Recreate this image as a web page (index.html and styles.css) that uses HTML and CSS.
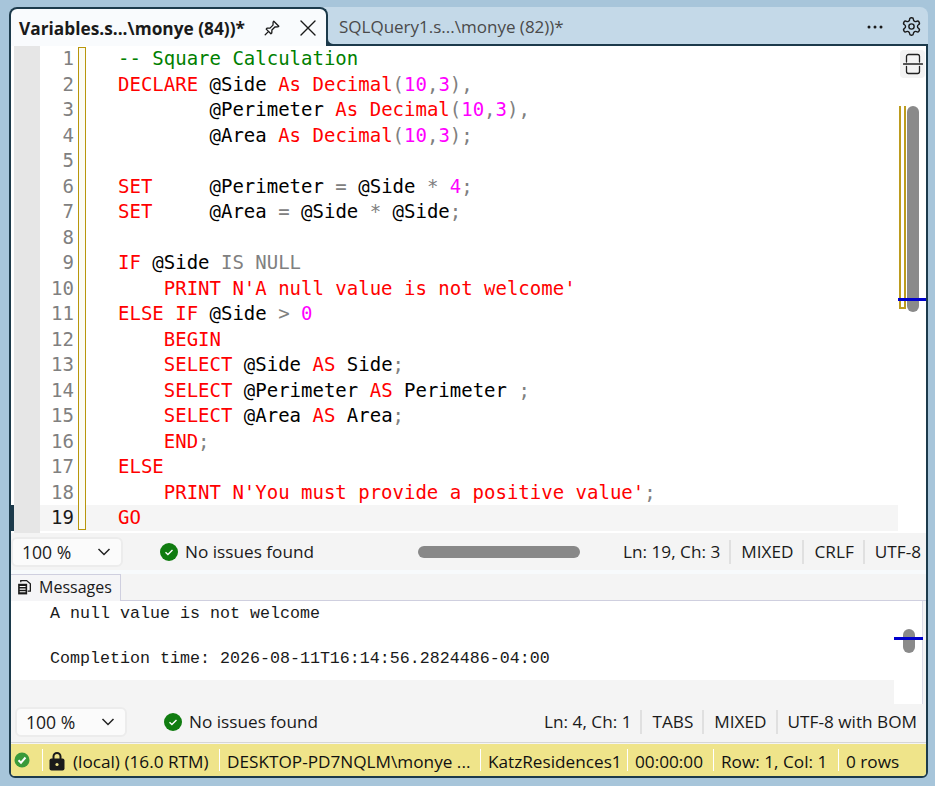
FILE: index.html
```html
<!DOCTYPE html>
<html lang="en">
<head>
<meta charset="UTF-8">
<title>Variables.sql</title>
<link rel="stylesheet" href="styles.css">
</head>
<body>

<div class="window">

  <!-- tab strip -->
  <div class="tabstrip">
    <div class="tab active">
      <span class="tab-title">Variables.s...\monye (84))*</span>
      <svg class="pin" width="18" height="18" viewBox="0 0 18 18" fill="none" stroke="#1a1a1a" stroke-width="1.3" stroke-linejoin="round" stroke-linecap="round">
        <path d="M10.8 2.2 15.8 7.2 14.8 7.9 11.9 8 8.9 11 8.8 14 7.9 14.8 3.2 10.1 4 9.2 7 9.1 10 6.1 10.1 3.2Z"/>
        <path d="M5.4 12.6 2.2 15.8"/>
      </svg>
      <svg class="close" width="16" height="16" viewBox="0 0 16 16" stroke="#1a1a1a" stroke-width="1.4" stroke-linecap="round">
        <path d="M1 1 15 15M15 1 1 15"/>
      </svg>
    </div>
    <div class="tab other">SQLQuery1.s...\monye (82))*</div>
    <div class="tab-tools">
      <svg width="16" height="4" viewBox="0 0 16 4" fill="#1a1a1a"><circle cx="2" cy="2" r="1.5"/><circle cx="8" cy="2" r="1.5"/><circle cx="14" cy="2" r="1.5"/></svg>
      <svg width="21" height="21" viewBox="0 0 24 24" fill="none" stroke="#1a1a1a" stroke-width="1.6"><path d="M12.22 2h-.44a2 2 0 0 0-2 2v.18a2 2 0 0 1-1 1.73l-.43.25a2 2 0 0 1-2 0l-.15-.08a2 2 0 0 0-2.73.73l-.22.38a2 2 0 0 0 .73 2.73l.15.1a2 2 0 0 1 1 1.72v.51a2 2 0 0 1-1 1.74l-.15.09a2 2 0 0 0-.73 2.73l.22.38a2 2 0 0 0 2.73.73l.15-.08a2 2 0 0 1 2 0l.43.25a2 2 0 0 1 1 1.73V20a2 2 0 0 0 2 2h.44a2 2 0 0 0 2-2v-.18a2 2 0 0 1 1-1.73l.43-.25a2 2 0 0 1 2 0l.15.08a2 2 0 0 0 2.73-.73l.22-.39a2 2 0 0 0-.73-2.73l-.15-.08a2 2 0 0 1-1-1.74v-.5a2 2 0 0 1 1-1.74l.15-.09a2 2 0 0 0 .73-2.73l-.22-.38a2 2 0 0 0-2.73-.73l-.15.08a2 2 0 0 1-2 0l-.43-.25a2 2 0 0 1-1-1.73V4a2 2 0 0 0-2-2z"/><circle cx="12" cy="12" r="3"/></svg>
    </div>
  </div>

  <div class="body">

    <!-- editor -->
    <div class="editor">
      <div class="glyph-margin"></div>
      <div class="rows">
        <div class="row"><span class="ln">1</span><span class="code"><span class="c">-- Square Calculation</span></span></div>
        <div class="row"><span class="ln">2</span><span class="code"><span class="k">DECLARE</span> @Side <span class="k">As</span> <span class="k">Decimal</span><span class="p">(</span><span class="n">10</span><span class="p">,</span><span class="n">3</span><span class="p">),</span></span></div>
        <div class="row"><span class="ln">3</span><span class="code">        @Perimeter <span class="k">As</span> <span class="k">Decimal</span><span class="p">(</span><span class="n">10</span><span class="p">,</span><span class="n">3</span><span class="p">),</span></span></div>
        <div class="row"><span class="ln">4</span><span class="code">        @Area <span class="k">As</span> <span class="k">Decimal</span><span class="p">(</span><span class="n">10</span><span class="p">,</span><span class="n">3</span><span class="p">);</span></span></div>
        <div class="row"><span class="ln">5</span><span class="code"></span></div>
        <div class="row"><span class="ln">6</span><span class="code"><span class="k">SET</span>     @Perimeter <span class="p">=</span> @Side <span class="p">*</span> <span class="n">4</span><span class="p">;</span></span></div>
        <div class="row"><span class="ln">7</span><span class="code"><span class="k">SET</span>     @Area <span class="p">=</span> @Side <span class="p">*</span> @Side<span class="p">;</span></span></div>
        <div class="row"><span class="ln">8</span><span class="code"></span></div>
        <div class="row"><span class="ln">9</span><span class="code"><span class="k">IF</span> @Side <span class="p">IS NULL</span></span></div>
        <div class="row"><span class="ln">10</span><span class="code">    <span class="k">PRINT N'A null value is not welcome'</span></span></div>
        <div class="row"><span class="ln">11</span><span class="code"><span class="k">ELSE IF</span> @Side <span class="p">&gt;</span> <span class="n">0</span></span></div>
        <div class="row"><span class="ln">12</span><span class="code">    <span class="k">BEGIN</span></span></div>
        <div class="row"><span class="ln">13</span><span class="code">    <span class="k">SELECT</span> @Side <span class="k">AS</span> Side<span class="p">;</span></span></div>
        <div class="row"><span class="ln">14</span><span class="code">    <span class="k">SELECT</span> @Perimeter <span class="k">AS</span> Perimeter <span class="p">;</span></span></div>
        <div class="row"><span class="ln">15</span><span class="code">    <span class="k">SELECT</span> @Area <span class="k">AS</span> Area<span class="p">;</span></span></div>
        <div class="row"><span class="ln">16</span><span class="code">    <span class="k">END</span><span class="p">;</span></span></div>
        <div class="row"><span class="ln">17</span><span class="code"><span class="k">ELSE</span></span></div>
        <div class="row"><span class="ln">18</span><span class="code">    <span class="k">PRINT N'You must provide a positive value'</span><span class="p">;</span></span></div>
        <div class="row current"><span class="ln">19</span><span class="code"><span class="k">GO</span></span></div>
      </div>

      <!-- things lying over the text -->
      <div class="change-bar"></div>
      <div class="current-mark"></div>
      <div class="split-btn">
        <svg width="20" height="24" viewBox="0 0 20 24" fill="none" stroke="#222" stroke-width="1.3" stroke-linecap="round">
          <path d="M3.5 10V4.5A2 2 0 0 1 5.500 2.500H14.500A2 2 0 0 1 16.500 4.500V10"/>
          <path d="M3.500 14.500V19.500A2 2 0 0 0 5.500 21.500H14.500A2 2 0 0 0 16.500 19.500V14.500"/>
          <path d="M0.500 12H19.500"/>
        </svg>
      </div>
      <div class="map-box"></div>
      <div class="map-thumb"></div>
      <div class="map-line"></div>
    </div>

    <div class="toolbar top-bar">
      <div class="zoom-select"><span>100 %</span><svg width="14" height="8" viewBox="0 0 14 8" fill="none" stroke="#222" stroke-width="1.5"><path d="M1.500 1 7 6.500 12.500 1"/></svg></div>
      <div class="issues">
        <svg width="18" height="18" viewBox="0 0 18 18"><circle cx="9" cy="9" r="9" fill="#107c10"/><path d="M5.500 9.300 7.900 11.500 12.500 6.900" fill="none" stroke="#fff" stroke-width="1.400"/></svg>
        <span>No issues found</span>
      </div>
      <div class="h-thumb"></div>
      <div class="stats">
        <span>Ln: 19, Ch: 3</span><span>MIXED</span><span>CRLF</span><span>UTF-8</span>
      </div>
    </div>

    <div class="results-tabs">
      <div class="msg-tab">
        <svg width="15" height="17" viewBox="0 0 14 16" fill="none" stroke="#1a1a1a" stroke-width="1.200">
          <path d="M3.500 3V1.500H9L12.500 4.500V11.500H10"/>
          <path d="M1 4.500H9.500V14.500H1Z" fill="#1a1a1a" stroke="none"/>
          <path d="M2.500 7H8M2.500 9.500H8M2.500 12H8" stroke="#fff" stroke-width="1"/>
        </svg>
        <span>Messages</span>
      </div>
    </div>

    <!-- output -->
    <div class="output">
      <pre class="output-text">A null value is not welcome

Completion time: 2026-08-11T16:14:56.2824486-04:00</pre>
      <div class="output-foot"></div>
      <div class="output-thumb"></div>
      <div class="output-line"></div>
    </div>

    <div class="toolbar bottom-bar">
      <div class="zoom-select"><span>100 %</span><svg width="14" height="8" viewBox="0 0 14 8" fill="none" stroke="#222" stroke-width="1.5"><path d="M1.500 1 7 6.500 12.500 1"/></svg></div>
      <div class="issues">
        <svg width="18" height="18" viewBox="0 0 18 18"><circle cx="9" cy="9" r="9" fill="#107c10"/><path d="M5.500 9.300 7.900 11.500 12.500 6.900" fill="none" stroke="#fff" stroke-width="1.400"/></svg>
        <span>No issues found</span>
      </div>
      <div class="stats">
        <span>Ln: 4, Ch: 1</span><span>TABS</span><span>MIXED</span><span>UTF-8 with BOM</span>
      </div>
    </div>

    <!-- connection status -->
    <div class="statusbar">
      <div class="st st-ok">
        <svg width="16" height="16" viewBox="0 0 16 16"><circle cx="8" cy="8" r="7.500" fill="#3a9a3a"/><path d="M4.500 8.200 7 10.700 11.500 5.500" fill="none" stroke="#fff" stroke-width="2"/></svg>
      </div>
      <div class="st st-server">
        <svg width="16" height="20" viewBox="0 0 16 20"><path d="M4.500 8V5.500A3.500 3.500 0 0 1 11.500 5.500V8" fill="none" stroke="#1a1a1a" stroke-width="2"/><rect x="0.500" y="7.500" width="15" height="12" rx="2" fill="#1a1a1a"/><circle cx="8" cy="13.500" r="1.600" fill="#efe48a"/></svg>
        <span>(local) (16.0 RTM)</span>
      </div>
      <div class="st st-user">DESKTOP-PD7NQLM\monye ...</div>
      <div class="st st-db">KatzResidences1</div>
      <div class="st st-time">00:00:00</div>
      <div class="st st-pos">Row: 1, Col: 1</div>
      <div class="st">0 rows</div>
    </div>

  </div>
</div>

</body>
</html>
```

FILE: styles.css
```css
* {
  box-sizing: border-box;
}

body {
  margin: 0;
  height: 786px;
  overflow: hidden;
  padding: 7px 7px 8px 9px;
  background-color: #a7c5da;
  font-family: "Open Sans", "Noto Sans", sans-serif;
  font-size: 17.2px;
  color: #1a1a1a;
}

.window {
  display: flex;
  flex-direction: column;
  height: 771px;
}

/* tabs */
.tabstrip {
  display: flex;
  align-items: flex-start;
  height: 37px;
  flex: none;
  background-color: #c4d9e8;
  border-radius: 8px 8px 0 0;
}

.tab {
  display: flex;
  align-items: center;
  white-space: nowrap;
  height: 37px;
}

.tab.active {
  width: 319px;
  height: 39px;
  padding: 1px 0 0 8px;
  background-color: #f9fbfd;
  border: 2px solid #1c3a4b;
  border-bottom: none;
  border-radius: 8px 8px 0 0;
  position: relative;
  z-index: 2;
}

/* 右下の小さな丸み */
.tab.active::after {
  content: "";
  position: absolute;
  left: 100%;
  bottom: 0;
  width: 8px;
  height: 8px;
  background-color: #c4d9e8;
  border-left: 2px solid #1c3a4b;
  border-bottom: 2px solid #1c3a4b;
  border-bottom-left-radius: 7px;
}

.tab-title {
  font-weight: 700;
  width: 237px;
  font-size: 17.3px;
}

.pin {
  margin-left: 7px;
}

.close {
  margin-left: 19px;
}

.tab.other {
  padding: 2px 0 0 11px;
  color: #4a4a4a;
  font-size: 17px;
}

.tab-tools {
  display: flex;
  align-items: center;
  gap: 18px;
  height: 37px;
  margin-left: auto;
  padding: 2px 6px 0 0;
}

/* everything under the tabs */
.body {
  flex: 1;
  display: flex;
  flex-direction: column;
  min-height: 0;
  border: 2px solid #1c3a4b;
  border-radius: 0 0 6px 6px;
  background-color: #f4f4f4;
  overflow: hidden;
}

/* editor */
.editor {
  display: flex;
  position: relative;
  height: 487px;
  flex: none;
  background-color: white;
  padding-left: 3px;
}

.glyph-margin {
  width: 26px;
  background-color: #e6e6e6;
  flex: none;
}

.rows {
  flex: 1;
  padding-right: 28px;
}

.row {
  display: flex;
  height: 25.5px;
  line-height: 25.5px;
  font-family: "DejaVu Sans Mono", monospace;
  font-size: 19px;
  color: black;
}

.row.current {
  background-color: #f5f5f5;
}

.ln {
  width: 34px;
  text-align: right;
  color: #808080;
  flex: none;
}

.current .ln {
  color: #1a1a1a;
}

.code {
  margin-left: 44px;
  white-space: pre;
}

.k { color: #ff0000; }
.n { color: #ff00ff; }
.p { color: #808080; }
.c { color: #008000; }

.change-bar {
  position: absolute;
  left: 67px;
  top: 1px;
  width: 8px;
  height: 483px;
  border: 1px solid #b8960c;
  background-color: #fbfbf3;
}

.current-mark {
  position: absolute;
  left: -2px;
  top: 459px;
  width: 5px;
  height: 26px;
  background-color: #1c3a4b;
}

.split-btn {
  position: absolute;
  right: 1px;
  top: 4px;
  width: 25px;
  height: 28px;
  display: flex;
  align-items: center;
  justify-content: center;
  background-color: #f3f3f3;
  border-radius: 4px;
}

.map-box {
  position: absolute;
  left: 888px;
  top: 60px;
  width: 7px;
  height: 203px;
  border: 2px solid #bd9c1e;
  border-top: none;
  background-color: white;
}

.map-thumb {
  position: absolute;
  left: 896px;
  top: 60px;
  width: 12px;
  height: 206px;
  background-color: #8a8a8a;
  border-radius: 6px;
}

.map-line {
  position: absolute;
  left: 887px;
  top: 252px;
  width: 30px;
  height: 3px;
  background-color: #0000cd;
}

/* status rows */
.toolbar {
  display: flex;
  align-items: center;
  flex: none;
  background-color: #f4f4f4;
}

.top-bar {
  height: 37px;
}

.bottom-bar {
  height: 39px;
  padding: 0 0 3px 4px;
  border-bottom: 1px solid #d6d6d6;
}

.bottom-bar .stats {
  padding-right: 9px;
}

.zoom-select {
  display: flex;
  align-items: center;
  justify-content: space-between;
  flex: none;
  width: 112px;
  height: 30px;
  padding: 0 10px 0 9px;
  background-color: #fbfbfb;
  border: 2px solid #ececec;
  border-radius: 6px;
  font-size: 17.6px;
}

.issues {
  display: flex;
  align-items: center;
  gap: 7px;
  margin-left: 37px;
}

.h-thumb {
  width: 162px;
  height: 12px;
  background-color: #888;
  border-radius: 6px;
  margin-left: 104px;
}

.stats {
  display: flex;
  margin-left: auto;
  padding-right: 5px;
}

.stats span {
  padding: 0 9px 0 10px;
  border-left: 2px solid #e0e0e0;
  line-height: 24px;
}

.stats span:first-child {
  border-left: none;
}

.stats span:last-child {
  padding-right: 0;
}

.results-tabs {
  height: 31px;
  flex: none;
  padding-top: 4px;
  background: linear-gradient(#f7fafc 0 4px, #f4f4f4 4px);
  border-bottom: 1px solid #cfcfdf;
  display: flex;
}

.msg-tab {
  display: flex;
  align-items: center;
  gap: 7px;
  width: 110px;
  height: 27px;
  padding: 0 0 2px 6px;
  border: 1px solid #cfcfdf;
  border-bottom: none;
  border-left: none;
  background-color: #f5f5f7;
  font-size: 16px;
}

.output {
  position: relative;
  height: 103px;
  flex: none;
  background-color: white;
  border-right: 1px solid #dcdce8;
  margin-right: 3px;
  display: flex;
  flex-direction: column;
  justify-content: space-between;
}

.output-text {
  margin: 0;
  padding: 2px 0 0 39px;
  font-family: "Liberation Mono", monospace;
  font-size: 16.67px;
  line-height: 22.5px;
  color: #1a1a1a;
}

.output-foot {
  width: 883px;
  height: 24px;
  background-color: #f4f4f4;
}

.output-thumb {
  position: absolute;
  left: 892px;
  top: 28px;
  width: 12px;
  height: 24px;
  background-color: #8a8a8a;
  border-radius: 6px;
}

.output-line {
  position: absolute;
  left: 883px;
  top: 36px;
  width: 29px;
  height: 3px;
  background-color: #0000cd;
}

.statusbar {
  display: flex;
  align-items: center;
  height: 32px;
  flex: none;
  background-color: #efe48a;
  margin-top: 1px;
  color: #111;
  white-space: nowrap;
}

.st {
  display: flex;
  align-items: center;
  flex: none;
  gap: 8px;
  height: 22px;
  padding: 2px 0 0 7px;
  border-left: 1px solid #fff;
}

.st:first-child {
  border-left: none;
  width: 31px;
  padding: 0 0 0 3px;
}

.st-server {
  width: 177px;
  padding-left: 6px;
}

.st-user {
  width: 261px;
}

.st-db {
  width: 147px;
}

.st-time {
  width: 86px;
}

.st-pos {
  width: 125px;
}
```
